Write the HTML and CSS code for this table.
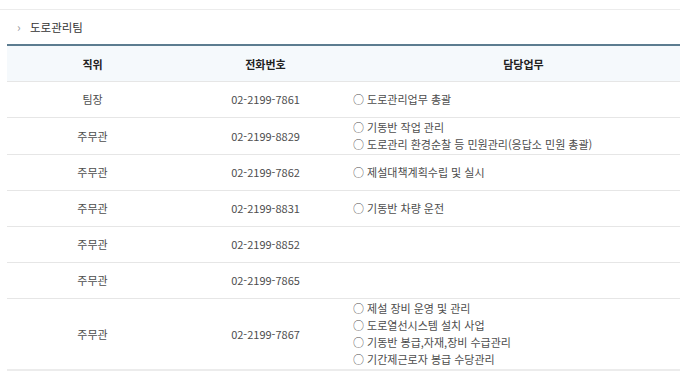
FILE: index.html
```html
<!DOCTYPE html>
<html lang="ko">
<head>
<meta charset="utf-8">
<link rel="stylesheet" href="styles.css">
</head>
<body>
<div class="page">
  <div class="topline"></div>
  <h3 class="title"><span class="chev">›</span>도로관리팀</h3>
  <table class="staff">
    <colgroup>
      <col class="c1"><col class="c2"><col class="c3">
    </colgroup>
    <thead>
      <tr><th>직위</th><th>전화번호</th><th class="duty-h">담당업무</th></tr>
    </thead>
    <tbody>
      <tr><td>팀장</td><td>02-2199-7861</td><td class="duty">○ 도로관리업무 총괄</td></tr>
      <tr><td>주무관</td><td>02-2199-8829</td><td class="duty">○ 기동반 작업 관리<br>○ 도로관리 환경순찰 등 민원관리(응답소 민원 총괄)</td></tr>
      <tr><td>주무관</td><td>02-2199-7862</td><td class="duty">○ 제설대책계획수립 및 실시</td></tr>
      <tr><td>주무관</td><td>02-2199-8831</td><td class="duty">○ 기동반 차량 운전</td></tr>
      <tr><td>주무관</td><td>02-2199-8852</td><td class="duty"></td></tr>
      <tr><td>주무관</td><td>02-2199-7865</td><td class="duty"></td></tr>
      <tr><td>주무관</td><td>02-2199-7867</td><td class="duty">○ 제설 장비 운영 및 관리<br>○ 도로열선시스템 설치 사업<br>○ 기동반 봉급,자재,장비 수급관리<br>○ 기간제근로자 봉급 수당관리</td></tr>
    </tbody>
  </table>
</div>
</body>
</html>
```
FILE: styles.css
```css
html, body {
  margin: 0;
  padding: 0;
  background: #fff;
  overflow: hidden;
}
body {
  width: 680px;
  height: 380px;
  font-family: "Noto Sans CJK KR", "Noto Sans", sans-serif;
  color: #4d4d4d;
}
.page {
  padding-top: 9px;
}
.topline {
  height: 1px;
  background: #ececec;
}
.title {
  margin: 0;
  padding: 9px 0 0 17px;
  height: 25px;
  box-sizing: border-box;
  font-size: 11.5px;
  font-weight: normal;
  color: #333;
  line-height: 16px;
  display: flex;
  align-items: center;
}
.chev {
  color: #999;
  font-size: 12px;
  width: 13px;
}
.staff {
  margin: 9px 0 0 7px;
  width: 687px;
  border-collapse: collapse;
  table-layout: fixed;
  font-size: 11px;
  border-top: 2px solid #5c7c90;
}
.c1 { width: 171px; }
.c2 { width: 175px; }
.c3 { width: 341px; }
.staff th {
  background: #f5f9fc;
  height: 35px;
  padding: 0;
  font-weight: bold;
  color: #222;
  border-bottom: 1px solid #e6e6e6;
}
.staff td {
  text-align: center;
  height: 33px;
  padding: 1px 0;
  line-height: 17px;
  border-bottom: 1px solid #e6e6e6;
}
.staff td.duty {
  text-align: left;
}
.staff tbody tr:last-child td {
  border-bottom: 2px solid #ececec;
}
```
